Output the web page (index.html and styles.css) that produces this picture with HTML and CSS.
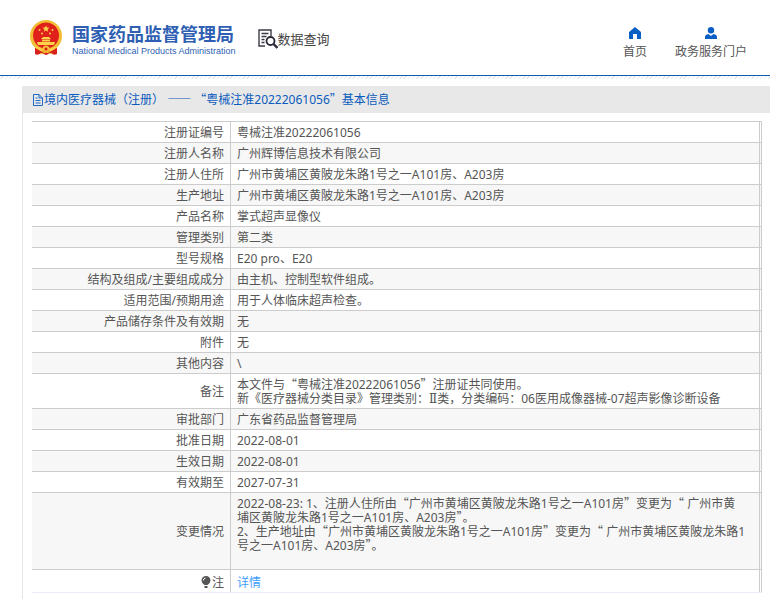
FILE: index.html
```html
<!DOCTYPE html>
<html lang="zh-CN">
<head>
  <meta charset="UTF-8">
  <title>国家药品监督管理局 数据查询</title>
  <link rel="stylesheet" href="styles.css">
</head>
<body>
  <header class="header">
    <a class="logo" href="#">
      <svg class="emblem" viewBox="0 0 34 36" aria-hidden="true">
        <path d="M6 26 L6 34 Q9 36 12 33 L17 35 L22 33 Q25 36 28 34 L28 26 Z" fill="#d8201c"/>
        <circle cx="17" cy="16" r="16" fill="#f3bd35"/>
        <circle cx="17" cy="15.500" r="13" fill="#e0211b"/>
        <path d="M17 5.500l1 2.100 2.300.2-1.700 1.600.5 2.300-2.100-1.200-2.100 1.200.5-2.300-1.700-1.600 2.300-.2z" fill="#fbd24a"/>
        <g fill="#fbd24a">
          <circle cx="10.500" cy="10" r="1"/><circle cx="13" cy="13.500" r="1"/>
          <circle cx="21" cy="13.500" r="1"/><circle cx="23.500" cy="10" r="1"/>
          <path d="M12 19l2-2h6l2 2zM13 19.500h8v2h-8zM8 22h18l-1 3H9z"/>
        </g>
        <path d="M6 27q5 1 7 4M28 27q-5 1-7 4" fill="none" stroke="#fbd24a" stroke-width="1.500"/>
        <circle cx="17" cy="29" r="3.500" fill="#f3bd35"/>
        <circle cx="17" cy="29" r="1.500" fill="#e0211b"/>
        <path d="M11 34l6-2 6 2" fill="none" stroke="#f3bd35"/>
      </svg>
      <span class="logo-text">
        <strong class="logo-cn">国家药品监督管理局</strong>
        <span class="logo-en">National Medical Products Administration</span>
      </span>
    </a>
    <a class="search" href="#">
      <svg class="search-icon" viewBox="0 0 20 20" aria-hidden="true">
        <path d="M13 7V1H1v16h6M3.500 4.500h7M3.500 7.500h5M3.500 10.500h3M3.500 13.500h3" fill="none" stroke="#3d3b47" stroke-width="1.400"/>
        <circle cx="12.500" cy="12" r="4" fill="#fff" stroke="#2b2937" stroke-width="1.800"/>
        <path d="M15.500 15l4 4" stroke="#2b2937" stroke-width="2.400"/>
      </svg>
      <span>数据查询</span>
    </a>
    <nav class="nav">
      <a class="nav-item" href="#">
        <svg class="nav-icon" viewBox="0 0 12 12" aria-hidden="true">
          <path d="M6 0L12 5V12H8V7H4V12H0V5Z" fill="#0a5fc4"/>
        </svg>
        首页
      </a>
      <a class="nav-item" href="#">
        <svg class="nav-icon" viewBox="0 0 12 12" aria-hidden="true">
          <circle cx="6" cy="3.200" r="3.200" fill="#0a5fc4"/>
          <path d="M0 12V10Q0 7.500 3.500 7L6 9L8.500 7Q12 7.500 12 10V12Z" fill="#0a5fc4"/>
        </svg>
        政务服务门户
      </a>
    </nav>
  </header>

  <main class="content">
    <h1 class="title">
      <svg class="doc-icon" viewBox="0 0 10 12" aria-hidden="true">
        <path d="M.5.5h5.500l3.500 3.500v7.500h-9zM6 .5v3.500h3.500M2.500 4h2M2.500 6.500h5M2.500 9h5" fill="none" stroke="#1c6ac4"/>
      </svg>
      <span>境内医疗器械（注册） <span class="cjk">——</span> <span class="cjk">“</span>粤械注准20222061056<span class="cjk">”</span>基本信息</span>
    </h1>

    <div class="frame">
      <table class="info">
        <tbody>
          <tr><th scope="row">注册证编号</th><td>粤械注准20222061056</td></tr>
          <tr><th scope="row">注册人名称</th><td>广州辉博信息技术有限公司</td></tr>
          <tr><th scope="row">注册人住所</th><td>广州市黄埔区黄陂龙朱路1号之一A101房、A203房</td></tr>
          <tr><th scope="row">生产地址</th><td>广州市黄埔区黄陂龙朱路1号之一A101房、A203房</td></tr>
          <tr><th scope="row">产品名称</th><td>掌式超声显像仪</td></tr>
          <tr><th scope="row">管理类别</th><td>第二类</td></tr>
          <tr><th scope="row">型号规格</th><td>E20 pro、E20</td></tr>
          <tr><th scope="row">结构及组成/主要组成成分</th><td>由主机、控制型软件组成。</td></tr>
          <tr><th scope="row">适用范围/预期用途</th><td>用于人体临床超声检查。</td></tr>
          <tr><th scope="row">产品储存条件及有效期</th><td>无</td></tr>
          <tr><th scope="row">附件</th><td>无</td></tr>
          <tr><th scope="row">其他内容</th><td>\</td></tr>
          <tr>
            <th scope="row">备注</th>
            <td>本文件与<span class="cjk">“</span>粤械注准20222061056<span class="cjk">”</span>注册证共同使用。<br>新《医疗器械分类目录》管理类别<span class="centered">：</span><span class="roman">Ⅱ</span>类<span class="centered">，</span>分类编码<span class="centered">：</span>06医用成像器械-07超声影像诊断设备</td>
          </tr>
          <tr><th scope="row">审批部门</th><td>广东省药品监督管理局</td></tr>
          <tr><th scope="row">批准日期</th><td>2022-08-01</td></tr>
          <tr><th scope="row">生效日期</th><td>2022-08-01</td></tr>
          <tr><th scope="row">有效期至</th><td>2027-07-31</td></tr>
          <tr>
            <th scope="row">变更情况</th>
            <td>2022-08-23: 1、注册人住所由<span class="cjk">“</span>广州市黄埔区黄陂龙朱路1号之一A101房<span class="cjk">”</span>变更为<span class="cjk">“</span> 广州市黄<br>埔区黄陂龙朱路1号之一A101房、A203房<span class="cjk">”</span>。<br>2、生产地址由<span class="cjk">“</span>广州市黄埔区黄陂龙朱路1号之一A101房<span class="cjk">”</span>变更为<span class="cjk">“</span> 广州市黄埔区黄陂龙朱路1<br>号之一A101房、A203房<span class="cjk">”</span>。<br><br></td>
          </tr>
          <tr class="note">
            <th scope="row">
              <svg class="bulb" viewBox="0 0 10 12" aria-hidden="true">
                <path d="M5 0a4.500 4.500 0 0 1 4.500 4.500Q9.500 7 6.500 9h-3Q.5 7 .5 4.500A4.500 4.500 0 0 1 5 0zM3.500 10h3v2h-3z" fill="#555"/>
                <path d="M2.300 4.500Q2.500 2.500 4.500 2" fill="none" stroke="#fff"/>
              </svg>注
            </th>
            <td><a class="detail" href="#">详情</a></td>
          </tr>
        </tbody>
      </table>
    </div>
  </main>
</body>
</html>
```

FILE: styles.css
```css
body {
  margin: 0;
  background: #fff;
  color: #555;
  font-family: "Noto Sans", "Noto Sans CJK SC", sans-serif;
  font-size: 12px;
  line-height: 14px;
}

a {
  color: inherit;
  text-decoration: none;
}

/* full-width quotes and dashes */
.cjk {
  font-family: "Noto Sans CJK SC", sans-serif;
  line-height: 1;
}

/* punctuation in the middle of its square */
.centered {
  font-family: "Noto Sans CJK TC", sans-serif;
  line-height: 1;
}

.roman {
  font-family: "DejaVu Serif", serif;
  line-height: 1;
}

.header {
  display: flex;
  align-items: center;
  height: 75px;
  padding: 0 23px 0 29px;
  border-bottom: 1px solid #0f5cb0;
}

.logo {
  display: flex;
  align-items: center;
  gap: 9px;
  color: #2f5fb3;
}

.emblem {
  width: 34px;
  height: 36px;
}

.logo-text {
  display: flex;
  flex-direction: column;
  padding-top: 4px;
  white-space: nowrap;
}

.logo-cn {
  font-size: 18px;
  line-height: 22px;
}

.logo-en {
  font-family: "Liberation Sans", Arial, sans-serif;
  font-size: 9px;
  line-height: 12px;
}

.search {
  display: flex;
  align-items: center;
  margin-left: 22px;
  padding-top: 3px;
  color: #444;
  font-size: 13px;
}

.search-icon {
  width: 20px;
  height: 20px;
}

.nav {
  display: flex;
  gap: 28px;
  margin-left: auto;
}

.nav-item {
  display: flex;
  flex-direction: column;
  align-items: center;
  gap: 6px;
  padding-top: 10px;
}

.nav-icon {
  width: 12px;
  height: 12px;
}

/* faint hatched strip under the header line */
.content {
  padding: 10px 0 0 22px;
  background: repeating-linear-gradient(135deg, #fff 0 2px, #e8e8e8 2px 3px) top / 100% 3px no-repeat;
}

.title {
  display: flex;
  align-items: center;
  gap: 1px;
  height: 26px;
  margin: 0;
  padding: 1px 11px 0;
  background: #e8e8e8;
  color: #0a5bbd;
  font-size: 12px;
  font-weight: normal;
}

.doc-icon {
  width: 10px;
  height: 12px;
}

.frame {
  padding: 8px 8px 20px 9px;
  border-left: 1px solid #e6e6ec;
}

.info {
  width: 100%;
  border-collapse: separate;
  border-spacing: 0;
  border-bottom: 1px solid #ebebf5;
}

.info th,
.info td {
  padding: 4px 6px 2px;
  border-top: 1px solid #ccc;
}

.info th {
  width: 186px;
  font-weight: normal;
  text-align: right;
}

.info td {
  border-left: 1px solid #ccc;
  border-right: 3px double #ccc;
}

.info tr:nth-child(even) {
  background: #f7f7f7;
}

.info .note th,
.info .note td {
  padding-top: 6px;
}

.bulb {
  width: 10px;
  height: 12px;
  vertical-align: -1px;
  margin-right: 1px;
}

.detail {
  color: #409eff;
}
```
